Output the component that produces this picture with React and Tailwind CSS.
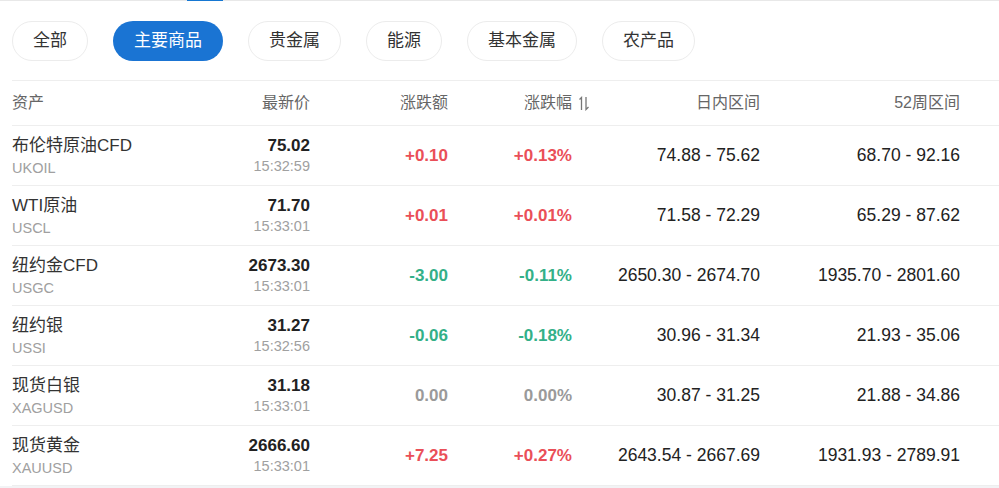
import React from "react"

const tabs = ["全部", "主要商品", "贵金属", "能源", "基本金属", "农产品"]

const rows = [
  { name: "布伦特原油CFD", code: "UKOIL", price: "75.02", time: "15:32:59", chg: "+0.10", pct: "+0.13%", day: "74.88 - 75.62", wk: "68.70 - 92.16", dir: 1 },
  { name: "WTI原油", code: "USCL", price: "71.70", time: "15:33:01", chg: "+0.01", pct: "+0.01%", day: "71.58 - 72.29", wk: "65.29 - 87.62", dir: 1 },
  { name: "纽约金CFD", code: "USGC", price: "2673.30", time: "15:33:01", chg: "-3.00", pct: "-0.11%", day: "2650.30 - 2674.70", wk: "1935.70 - 2801.60", dir: -1 },
  { name: "纽约银", code: "USSI", price: "31.27", time: "15:32:56", chg: "-0.06", pct: "-0.18%", day: "30.96 - 31.34", wk: "21.93 - 35.06", dir: -1 },
  { name: "现货白银", code: "XAGUSD", price: "31.18", time: "15:33:01", chg: "0.00", pct: "0.00%", day: "30.87 - 31.25", wk: "21.88 - 34.86", dir: 0 },
  { name: "现货黄金", code: "XAUUSD", price: "2666.60", time: "15:33:01", chg: "+7.25", pct: "+0.27%", day: "2643.54 - 2667.69", wk: "1931.93 - 2789.91", dir: 1 },
]

const grid = "grid grid-cols-[188px_110px_138px_124px_188px_200px] items-center"

function SortIcon() {
  return (
    <svg width="12" height="15" viewBox="0 0 12 15" fill="none" stroke="#777" strokeWidth="1.3" className="ml-[6px] -mr-[18px]">
      <path d="M3.5 14V1.5L1.5 3.5" />
      <path d="M8 1v12.5l2.5-2.5" />
    </svg>
  )
}

export default function App() {
  const color = (d) => (d > 0 ? "text-[#ea4f58]" : d < 0 ? "text-[#33b088]" : "text-[#9a9a9a]")
  return (
    <div className="w-[999px] h-[488px] bg-white overflow-hidden font-['Liberation_Sans','Noto_Sans_CJK_SC',sans-serif] text-[#333]">
      <div className="h-px bg-[#e8e8e8] flex">
        <div className="ml-[187px] w-[36px] bg-[#1677d2]" />
      </div>
      <div className="flex gap-[25px] px-3 pt-[20px] pb-[19px]">
        {tabs.map((t) => (
          <div
            key={t}
            className={
              t === "主要商品"
                ? "h-[40px] px-[21px] rounded-full bg-[#1a74d3] text-white text-[17px] flex items-center"
                : "h-[40px] px-[20px] rounded-full border border-[#ececec] text-[#333] text-[17px] flex items-center"
            }
          >
            {t}
          </div>
        ))}
      </div>
      <div className="ml-3">
        <div className={`${grid} h-[46px] border-t border-b border-[#eeeeee] text-[16px] text-[#666]`}>
          <div>资产</div>
          <div className="text-right">最新价</div>
          <div className="text-right">涨跌额</div>
          <div className="flex justify-end items-center">涨跌幅<SortIcon /></div>
          <div className="text-right">日内区间</div>
          <div className="text-right">52周区间</div>
        </div>
        {rows.map((r) => (
          <div key={r.code} className={`${grid} h-[60px] border-b border-[#eeeeee]`}>
            <div className="flex flex-col pt-[3px]">
              <span className="text-[17px] leading-[22px] text-[#333]">{r.name}</span>
              <span className="text-[14.5px] leading-[22px] text-[#a0a0a0]">{r.code}</span>
            </div>
            <div className="flex flex-col items-end pt-[1px]">
              <span className="text-[17px] leading-[20px] font-bold text-[#222]">{r.price}</span>
              <span className="text-[14.5px] leading-[20px] text-[#a0a0a0]">{r.time}</span>
            </div>
            <div className={`text-right text-[17px] font-bold ${color(r.dir)}`}>{r.chg}</div>
            <div className={`text-right text-[17px] font-bold ${color(r.dir)}`}>{r.pct}</div>
            <div className="text-right text-[17.5px] text-[#222]">{r.day}</div>
            <div className="text-right text-[17.5px] text-[#222]">{r.wk}</div>
          </div>
        ))}
      </div>
      <div className="h-[10px] bg-[#f2f3f5]" />
    </div>
  )
}
